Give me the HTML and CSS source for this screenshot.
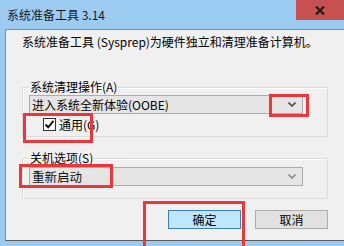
FILE: index.html
```html
<!DOCTYPE html>
<html lang="zh-CN">
<head>
    <meta charset="UTF-8">
    <title>系统准备工具 3.14</title>
    <link rel="stylesheet" href="styles.css">
</head>
<body>

<div class="window">
    <div class="titlebar">
        <span class="title">系统准备工具 3.14</span>
        <div class="close">
            <svg width="10" height="9" viewBox="0 0 10 9">
                <path d="M1 0.5 L9 8.5 M9 0.5 L1 8.5" stroke="#1e1e1e" stroke-width="2.2"/>
            </svg>
        </div>
    </div>

    <div class="client">
        <p class="intro">系统准备工具 (Sysprep)为硬件独立和清理准备计算机。</p>

        <fieldset class="group group-clean">
            <legend>系统清理操作(A)</legend>
            <div class="combo">
                <span>进入系统全新体验(OOBE)</span>
                <svg class="arrow" width="8" height="5" viewBox="0 0 8 5">
                    <path d="M0.5 0.5 L4 4 L7.5 0.5" fill="none" stroke="#4a4a4a" stroke-width="1.6"/>
                </svg>
            </div>
            <label class="check-row">
                <span class="checkbox">
                    <svg width="11" height="11" viewBox="0 0 11 11">
                        <path d="M1.5 5.5 L4.2 8.3 L9.5 1.8" fill="none" stroke="#111" stroke-width="2"/>
                    </svg>
                </span>
                通用(G)
            </label>
        </fieldset>

        <fieldset class="group group-shutdown">
            <legend>关机选项(S)</legend>
            <div class="combo">
                <span class="combo-strong">重新启动</span>
                <svg class="arrow" width="8" height="5" viewBox="0 0 8 5">
                    <path d="M0.5 0.5 L4 4 L7.5 0.5" fill="none" stroke="#8a8a8a" stroke-width="1.6"/>
                </svg>
            </div>
        </fieldset>

        <div class="buttons">
            <button class="btn btn-default">确定</button>
            <button class="btn">取消</button>
        </div>
    </div>

    <!-- annotation boxes drawn over the dialog -->
    <div class="mark mark-check"></div>
    <div class="mark mark-arrow"></div>
    <div class="mark mark-restart"></div>
    <div class="mark mark-ok"></div>
</div>

</body>
</html>
```

FILE: styles.css
```css
body {
    margin: 0;
    padding: 0;
    font-family: "Noto Sans CJK SC", "Liberation Sans", sans-serif;
    font-size: 12px;
    color: #000;
    background-color: #9ccbf2;
    overflow: hidden;
}
.window {
    position: relative;
    width: 344px;
    height: 246px;
    box-sizing: border-box;
    padding: 0 0 5px 5px;
    background-color: #9ccbf2;
    display: flex;
    flex-direction: column;
    overflow: hidden;
}
.titlebar {
    height: 29px;
    display: flex;
    align-items: flex-start;
    flex-shrink: 0;
}
.title {
    padding-left: 2px;
    margin-top: 8px;
    line-height: 14px;
    color: #1a1a1a;
}
.close {
    margin-left: auto;
    width: 48px;
    height: 20px;
    background-color: #c75050;
    display: flex;
    align-items: center;
    justify-content: center;
}
.client {
    flex: 1;
    background-color: #f0f0f0;
    border-top: 1px solid #8a8a8a;
    border-left: 1px solid #8a8a8a;
    border-bottom: 1px solid #5a5a5a;
    padding: 0 16px;
    display: flex;
    flex-direction: column;
}
.intro {
    margin: 5px 0 0 0;
    line-height: 14px;
}
.group {
    margin: 31px 0 0 0;
    padding: 1px 24px 4px 6px;
    border: 1px solid #dcdcdc;
    box-shadow: inset 1px 1px 0 #fff;
    min-width: 0;
}
.group legend {
    padding: 0 1px;
    line-height: 14px;
}
.group-shutdown {
    margin-top: 14px;
    padding-top: 2px;
    padding-bottom: 12px;
}
.combo {
    height: 19px;
    box-sizing: border-box;
    border: 1px solid #acacac;
    background-color: #e5e5e5;
    display: flex;
    align-items: center;
    padding: 0 6px 0 2px;
    line-height: 14px;
}
.combo .arrow {
    margin-left: auto;
}
.combo-strong {
    font-size: 12.5px;
    color: #111;
}
.check-row {
    margin: 3px 0 0 14px;
    height: 15px;
    display: flex;
    align-items: center;
    line-height: 14px;
}
.checkbox {
    width: 13px;
    height: 13px;
    box-sizing: border-box;
    border: 1px solid #333;
    background-color: #fff;
    margin-right: 3px;
    display: flex;
    align-items: center;
    justify-content: center;
}
.buttons {
    margin-top: 11px;
    display: flex;
    justify-content: flex-end;
    gap: 14px;
}
.btn {
    width: 73px;
    height: 19px;
    padding: 0;
    box-sizing: border-box;
    border: 1px solid #adadad;
    background-color: #e1e1e1;
    font-family: inherit;
    font-size: 12px;
    line-height: 14px;
    color: #000;
}
.btn-default {
    border-color: #3c7fb1;
    background-color: #bee6fd;
}
.mark {
    position: absolute;
    border: 3px solid #e8383b;
    box-sizing: border-box;
}
.mark-check {
    left: 23px;
    top: 113px;
    width: 70px;
    height: 30px;
}
.mark-arrow {
    left: 269px;
    top: 94px;
    width: 40px;
    height: 23px;
}
.mark-restart {
    left: 19px;
    top: 164px;
    width: 94px;
    height: 24px;
}
.mark-ok {
    left: 143px;
    top: 201px;
    width: 102px;
    height: 50px;
}
```
